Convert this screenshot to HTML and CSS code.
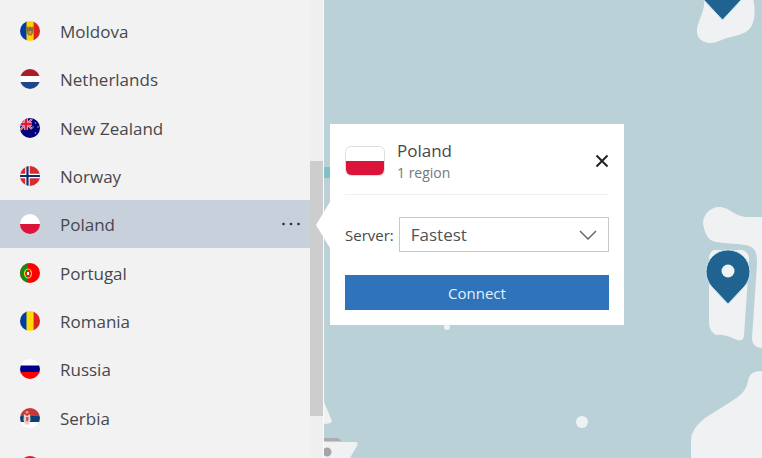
FILE: index.html
```html
<!DOCTYPE html>
<html lang="en">
<head>
<meta charset="utf-8">
<title>Choose a location</title>
<link rel="stylesheet" href="styles.css">
</head>
<body>
<div class="app">
  <nav class="sidebar" aria-label="Countries">
    <ul class="countries">
      <li class="country">
        <svg class="flag" viewBox="0 0 20 20"><path fill="#003da5" d="M0 0h7v20H0z"/><path fill="#ffd200" d="M6.500 0h7v20h-7z"/><path fill="#d9251c" d="M13.500 0H20v20h-6.500z"/><path fill="#9a6a2c" d="M6.500 5l2 1.500L10 5l1.500 1.500 2-1.500v4l-1 4-1.500 2-1-1.500-1 1.500-1.500-2-1-4z"/><path fill="#6b7a3c" d="M8.500 8h3v2h-3z"/><path fill="#d9902d" d="M8.500 10h3v3h-3z"/></svg>
        <a class="name" href="#moldova">Moldova</a>
      </li>
      <li class="country">
        <svg class="flag" viewBox="0 0 20 20"><path fill="#fff" d="M0 0h20v20H0z"/><path fill="#ae1c28" d="M0 0h20v7H0z"/><path fill="#21468b" d="M0 13h20v7H0z"/></svg>
        <a class="name" href="#netherlands">Netherlands</a>
      </li>
      <li class="country">
        <svg class="flag" viewBox="0 0 20 20"><path fill="#00007a" d="M0 0h20v20H0z"/><path stroke="#f5b5c5" stroke-width="2.200" d="M0 0l12 11M12 1L0 12"/><path stroke="#f5b5c5" stroke-width="3.600" d="M6 0v12M0 6h12"/><path stroke="#e4405f" stroke-width="1" d="M0 0l12 11M12 1L0 12"/><path stroke="#e01a3c" stroke-width="2" d="M6 0v12M0 6h12"/><g fill="#d98fb0"><circle cx="15.500" cy="5" r=".8"/><circle cx="13" cy="9" r=".8"/><circle cx="18" cy="9" r=".8"/><circle cx="15.500" cy="15" r=".8"/></g></svg>
        <a class="name" href="#new-zealand">New Zealand</a>
      </li>
      <li class="country">
        <svg class="flag" viewBox="0 0 20 20"><path fill="#d72b2f" d="M0 0h20v20H0z"/><path stroke="#fff" stroke-width="4.500" d="M7.500 0v20M0 10h20"/><path stroke="#0a2a72" stroke-width="2.200" d="M7.500 0v20M0 10h20"/></svg>
        <a class="name" href="#norway">Norway</a>
      </li>
      <li class="country selected">
        <svg class="flag" viewBox="0 0 20 20"><path fill="#fff" d="M0 0h20v10H0z"/><path fill="#dc143c" d="M0 10h20v10H0z"/></svg>
        <a class="name" href="#poland" aria-current="true">Poland</a>
        <button class="more" type="button" aria-label="More options for Poland"><svg viewBox="0 0 20 4"><circle cx="2.500" cy="2" r="1.300"/><circle cx="10" cy="2" r="1.300"/><circle cx="17.500" cy="2" r="1.300"/></svg></button>
      </li>
      <li class="country">
        <svg class="flag" viewBox="0 0 20 20"><path fill="#f00" d="M0 0h20v20H0z"/><path fill="#138a13" d="M0 0h8v20H0z"/><ellipse cx="8" cy="10.500" rx="3.500" ry="4.500" fill="none" stroke="#f2d12e" stroke-width="1.200"/><path stroke="#d9b52a" d="M5 8l6 5M5 13l6-5"/><path fill="#e21c1c" d="M6 8h4v4l-2 2-2-2z"/><path fill="#fff" d="M7 9h2v3H7z"/></svg>
        <a class="name" href="#portugal">Portugal</a>
      </li>
      <li class="country">
        <svg class="flag" viewBox="0 0 20 20"><path fill="#003da0" d="M0 0h7v20H0z"/><path fill="#ffd90a" d="M6.500 0h7v20h-7z"/><path fill="#d9251c" d="M13.500 0H20v20h-6.500z"/></svg>
        <a class="name" href="#romania">Romania</a>
      </li>
      <li class="country">
        <svg class="flag" viewBox="0 0 20 20"><path fill="#fff" d="M0 0h20v7H0z"/><path fill="#00008b" d="M0 6.500h20v7H0z"/><path fill="#f00" d="M0 13h20v7H0z"/></svg>
        <a class="name" href="#russia">Russia</a>
      </li>
      <li class="country">
        <svg class="flag" viewBox="0 0 20 20"><path fill="#fff" d="M0 0h20v20H0z"/><path fill="#c6363c" d="M0 0h20v8H0z"/><path fill="#0c4076" d="M0 8h20v6H0z"/><path fill="#e8cfca" d="M4 6l3 2 3-2 .5 6L9 16.500H5l-1.500-4.500z"/><path fill="#c6565c" d="M6 9h2.500v3L7 14l-1-2z"/><path fill="#e0a83a" d="M5.500 3h3v2.500h-3z"/></svg>
        <a class="name" href="#serbia">Serbia</a>
      </li>
      <li class="country">
        <svg class="flag" viewBox="0 0 20 20"><path fill="#fff" d="M0 0h20v20H0z"/><path fill="#df1a2c" d="M0 0h20v10H0z"/></svg>
      </li>
    </ul>
    <div class="scrollbar" aria-hidden="true"><div class="thumb"></div></div>
  </nav>

  <main class="map">
    <svg class="land" viewBox="324 0 438 458" preserveAspectRatio="xMinYMin slice" aria-hidden="true">
      <g fill="#f0f1f2">
        <path d="M704 -2C706 12 696 22 697 33C699 43 710 45 719 41C733 35 745 36 751 27C756 18 755 8 753 -2z"/>
        <path d="M762 217H748C734 217 730 207 719 207C710 207 703 215 703 223C704 232 708 241 716 242C726 244 740 243 749 246C757 249 757 256 757 264L752 338C752 344 756 348 762 348z"/>
        <path d="M714 250H742Q750 252 749 262L744 335Q744 342 737 340Q725 334 716 335Q710 332 709 324V257Q710 251 714 250z"/>
        <path d="M762 371C753 371 749 374 748 381C746 391 740 396 732 401L705 418Q691 429 691 440V458H762z"/>
        <path d="M324 402L332 421Q331 424 324 424z"/>
        <path d="M324 442H355Q359 442 357 446L350 458H324z"/>
        <circle cx="582" cy="422" r="6"/><circle cx="447" cy="327" r="3"/>
      </g>
      <path fill="#a9adae" d="M324 438H337Q341 439 341 441H324z"/>
      <circle cx="327" cy="452" r="4.500" fill="#a5a5a5"/>
      <path fill="#7fc1c6" d="M324 167h7v11h-7z"/>
      <g fill="#206391" stroke="#c6e6f3" stroke-width="1">
        <path d="M702 -2L722.500 20L743 -2z"/>
        <path d="M728 304L712 287A22 22 0 1 1 744 287z"/>
      </g>
      <circle cx="728" cy="271" r="6.500" fill="#eef3f5"/>
    </svg>

    <section class="popup" aria-label="Poland">
      <header class="popup-head">
        <svg class="banner" viewBox="0 0 40 30"><rect x=".5" y=".5" width="39" height="29" rx="5" fill="#fff" stroke="#dedede"/><path fill="#dc143c" d="M1 15h38v8q0 6-6 6H7q-6 0-6-6z"/></svg>
        <div class="place"><h1>Poland</h1><p>1 region</p></div>
        <button class="close" type="button" aria-label="Close"><svg viewBox="0 0 14 14"><path d="M1.500 1.500l11 11M12.500 1.500l-11 11"/></svg></button>
      </header>
      <div class="field">
        <label for="server">Server:</label>
        <div class="picker">
          <select id="server"><option>Fastest</option></select>
          <svg class="chevron" viewBox="0 0 18 10" aria-hidden="true"><path stroke-width="1.500" d="M1 1l8 8 8-8"/></svg>
        </div>
      </div>
      <button class="connect" type="button">Connect</button>
    </section>
  </main>
</div>
</body>
</html>
```
FILE: styles.css
```css
* {
  box-sizing: border-box;
}

body {
  margin: 0;
  font-family: "Open Sans", "Noto Sans", sans-serif;
  color: #46484d;
}

button,
select {
  font: inherit;
  border: 0;
  padding: 0;
}

.app {
  display: flex;
  height: 100vh;
  overflow: hidden;
}

.sidebar {
  display: flex;
  flex: 0 0 324px;
  background: #f2f2f2;
  border-right: 1px solid #fafafa;
}

.countries {
  display: flex;
  flex: 1;
  flex-direction: column;
  margin: 7px 0 -32px;
  padding: 0;
  list-style: none;
}

.country {
  display: flex;
  flex: 1 0 48px;
  align-items: center;
  gap: 20px;
  padding: 0 9px 0 20px;
}

.selected {
  background: #c8d0dc;
}

.flag {
  width: 20px;
  height: 20px;
  border-radius: 50%;
}

.name {
  flex: 1;
  padding-top: 2px;
  color: inherit;
  font-size: 17px;
  line-height: 24px;
  text-decoration: none;
}

.more {
  width: 20px;
  height: 24px;
  background: none;
}

.more svg {
  display: block;
  width: 20px;
  height: 4px;
  fill: #2b2e35;
}

.scrollbar {
  flex: 0 0 13px;
  padding-top: 161px;
  background: #efefef;
}

.thumb {
  height: 255px;
  background: #cdcdcd;
}

.map {
  position: relative;
  flex: 1;
  background: #bad1d8;
}

.land {
  display: block;
  width: 100%;
  height: 100%;
}

.popup {
  position: absolute;
  top: 124px;
  left: 6px;
  width: 294px;
  padding: 15px;
  background: #fff;
}

.popup::before {
  content: "";
  position: absolute;
  top: 78px;
  left: -14px;
  width: 14px;
  height: 46px;
  background: #fff;
  clip-path: polygon(0 50%, 100% 0, 100% 100%);
}

.popup-head {
  display: flex;
  align-items: center;
  gap: 12px;
  padding-bottom: 12px;
  border-bottom: 1px solid #f0f0f0;
}

.banner {
  width: 40px;
  height: 30px;
}

.place {
  flex: 1;
}

.place h1,
.place p {
  margin: 0;
  font-weight: 400;
}

.place h1 {
  font-size: 17px;
  line-height: 24px;
}

.place p {
  color: #77797c;
  font-size: 14px;
  line-height: 19px;
}

.close {
  width: 14px;
  height: 14px;
  background: none;
}

.close svg {
  display: block;
  fill: none;
  stroke: #222;
  stroke-width: 2;
}

.field {
  display: flex;
  align-items: center;
  gap: 5px;
  margin: 22px 0 23px;
  font-size: 15px;
}

.picker {
  position: relative;
  flex: 1;
}

.picker select {
  display: block;
  width: 100%;
  height: 35px;
  padding: 0 11px;
  border: 1px solid #c8c8c8;
  background: #fff;
  color: #505257;
  font-size: 17px;
  appearance: none;
}

.chevron {
  position: absolute;
  top: 13px;
  right: 12px;
  width: 18px;
  height: 10px;
  fill: none;
  stroke: #66686c;
  pointer-events: none;
}

.connect {
  display: block;
  width: 100%;
  height: 35px;
  background: #2f73bb;
  color: #e4f1ff;
  font-size: 15px;
}
```
